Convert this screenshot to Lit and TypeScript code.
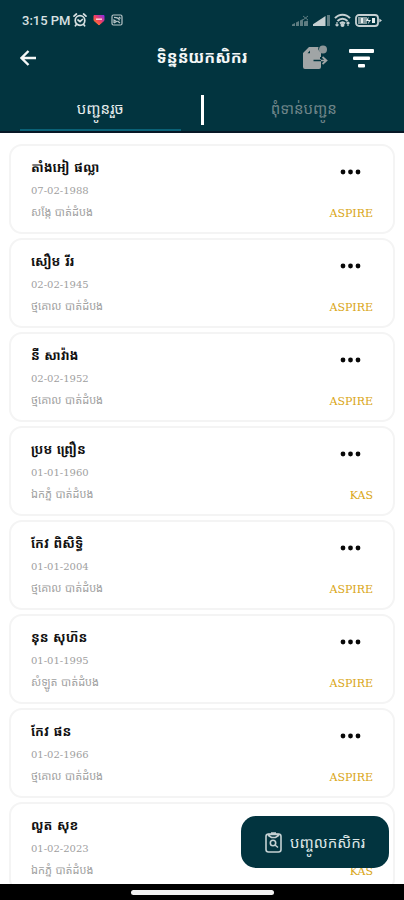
import { LitElement, html, css } from "lit";
import { customElement } from "lit/decorators.js";

interface Farmer {
  name: string;
  date: string;
  place: string;
  buyer: string;
}

const farmers: Farmer[] = [
  { name: "តាំងអៀ ផល្លា", date: "07-02-1988", place: "សង្កែ បាត់ដំបង", buyer: "ASPIRE" },
  { name: "សឿម រីរ", date: "02-02-1945", place: "ថ្មគោល បាត់ដំបង", buyer: "ASPIRE" },
  { name: "នី សាវ៉ាង", date: "02-02-1952", place: "ថ្មគោល បាត់ដំបង", buyer: "ASPIRE" },
  { name: "ប្រម ព្រឿន", date: "01-01-1960", place: "ឯកភ្នំ បាត់ដំបង", buyer: "KAS" },
  { name: "កែវ ពិសិទ្ធិ", date: "01-01-2004", place: "ថ្មគោល បាត់ដំបង", buyer: "ASPIRE" },
  { name: "នុន សុហ៊ន", date: "01-01-1995", place: "សំឡូត បាត់ដំបង", buyer: "ASPIRE" },
  { name: "កែវ ផន", date: "01-02-1966", place: "ថ្មគោល បាត់ដំបង", buyer: "ASPIRE" },
  { name: "លួត សុខ", date: "01-02-2023", place: "ឯកភ្នំ បាត់ដំបង", buyer: "KAS" },
];

@customElement("farmer-card")
class FarmerCard extends LitElement {
  static properties = { farmer: { attribute: false } };
  declare farmer: Farmer;

  static styles = css`
    :host {
      display: flex;
      justify-content: space-between;
      box-sizing: border-box;
      height: 90px;
      flex: none;
      padding: 10px 20px 7px;
      border: 2px solid #f4f4f4;
      border-radius: 13px;
      background: #fff;
    }
    .info,
    .side {
      display: flex;
      flex-direction: column;
      white-space: nowrap;
    }
    .side {
      align-items: flex-end;
      justify-content: space-between;
    }
    .name {
      margin: 0;
      font-size: 13px;
      line-height: 24px;
      height: 24px;
      font-weight: 700;
      color: #111;
    }
    .date,
    .place {
      height: 22px;
      font-size: 11px;
      line-height: 22px;
      color: #a0a0a0;
    }
    .date {
      font-size: 10px;
    }
    .more {
      width: 44px;
      height: 32px;
      padding: 0;
      border: 0;
      background: none;
      display: flex;
      align-items: center;
    }
    .buyer {
      font-size: 11px;
      line-height: 22px;
      height: 22px;
      color: #d9a514;
    }
  `;

  render() {
    const f = this.farmer;
    return html`
      <div class="info">
        <h2 class="name">${f.name}</h2>
        <time class="date">${f.date}</time>
        <span class="place">${f.place}</span>
      </div>
      <div class="side">
        <button class="more" aria-label="More">
          <svg width="44" height="8" viewBox="0 0 44 8" fill="#080808">
            <circle cx="14" cy="4" r="2.4" /><circle cx="21.5" cy="4" r="2.4" /><circle cx="29" cy="4" r="2.4" />
          </svg>
        </button>
        <span class="buyer">${f.buyer}</span>
      </div>
    `;
  }
}

@customElement("app-root")
class AppRoot extends LitElement {
  static styles = css`
    :host {
      display: flex;
      flex-direction: column;
      height: 100vh;
      overflow: hidden;
      background: #fff;
      font-family: "DejaVu Serif", "Noto Sans Khmer", "Khmer OS", serif;
    }
    svg {
      display: block;
      flex: none;
    }
    button {
      font-family: inherit;
      padding: 0;
      border: 0;
      background: none;
      color: inherit;
    }
    .head {
      flex: none;
      background: #02343f;
      color: #f4f7f7;
      border-bottom: 2px solid #071826;
    }
    .status {
      display: flex;
      align-items: center;
      height: 38px;
      padding: 2px 22px 0;
      box-sizing: border-box;
      font-family: Roboto, sans-serif;
      font-size: 13px;
      font-weight: 500;
      color: #d8e0e2;
    }
    .left,
    .right,
    .actions {
      display: flex;
      align-items: center;
    }
    .left {
      gap: 2px;
      flex: 1;
      white-space: nowrap;
    }
    .badges {
      display: flex;
      align-items: center;
      gap: 6px;
    }
    .right {
      gap: 4px;
    }
    .bar {
      display: grid;
      grid-template-columns: 1fr auto 1fr;
      align-items: center;
      height: 40px;
      padding: 0 20px;
    }
    .back {
      width: 18px;
      height: 32px;
      display: flex;
      align-items: center;
    }
    .title {
      margin: 0;
      font-size: 16px;
      line-height: 32px;
      font-weight: 700;
      white-space: nowrap;
    }
    .actions {
      gap: 20px;
      justify-content: flex-end;
      padding-right: 10px;
    }
    .tabs {
      display: grid;
      grid-template-columns: 1fr 3px 1fr;
      align-items: center;
      height: 53px;
    }
    .tab {
      height: 53px;
      margin: 0 20px;
      padding-top: 10px;
      box-sizing: border-box;
      border-bottom: 2px solid transparent;
      font-size: 15px;
      line-height: 40px;
      color: #6f8589;
      white-space: nowrap;
    }
    .tab.active {
      border-color: #0a6176;
      color: #e6eded;
    }
    .split {
      height: 30px;
      margin-top: 10px;
      background: #fff;
    }
    .list {
      flex: 1;
      min-height: 0;
      overflow: hidden;
      display: flex;
      flex-direction: column;
      gap: 4px;
      padding: 11px 9px 0 9px;
    }
    .add {
      position: absolute;
      right: 15px;
      bottom: 32px;
      display: flex;
      align-items: center;
      justify-content: center;
      gap: 8px;
      width: 148px;
      height: 52px;
      border-radius: 15px;
      background: #02343f;
      color: #dde6e6;
      font-size: 15px;
      white-space: nowrap;
    }
    .nav {
      flex: none;
      display: flex;
      justify-content: center;
      align-items: center;
      height: 16px;
      background: #000;
    }
    .pill {
      width: 143px;
      height: 5px;
      border-radius: 3px;
      background: #f2f2f2;
    }
  `;

  render() {
    return html`
      <header class="head">
        <div class="status">
          <div class="left">
            <span>3:15 PM</span>
            <div class="badges">
              <svg width="14" height="14" viewBox="0 0 14 14" fill="none" stroke="#d8e0e2" stroke-width="1.7" stroke-linecap="round">
                <circle cx="7" cy="7.5" r="4.8" /><path d="M1 3.2 3.4 1M13 3.2 10.6 1M5 7l2 1.7L9.3 6.5M3.4 11.5l-1 1.3M10.6 11.5l1 1.3" />
              </svg>
              <svg width="12" height="12" viewBox="0 0 12 12">
                <defs><linearGradient id="h" x1="0" y1="1" x2="1" y2="0"><stop offset="0" stop-color="#ff8a1f" /><stop offset=".5" stop-color="#f5405f" /><stop offset="1" stop-color="#8a2be2" /></linearGradient></defs>
                <path d="M1 1.5h10v5L6 11 1 6.5z" fill="url(#h)" stroke="url(#h)" stroke-linejoin="round" /><path d="M3 5.2h6" stroke="#ffd9e0" stroke-width="1.4" />
              </svg>
              <svg width="12" height="12" viewBox="0 0 12 12" fill="none" stroke="#b8c5c7" stroke-width="1.2">
                <rect x="1" y="1" width="10" height="10" rx="1.5" /><path d="M3 3.4c2 0 5 .6 5.5 3M3 9V6l2.5 1.5L3 9M9 9 6.5 7M8 3l1.5 1.5" />
              </svg>
            </div>
          </div>
          <div class="right">
            <svg width="17" height="11" viewBox="0 0 17 11" fill="#5f7d82"><path d="M0 11V9.4L3 8v3zM4 11V7.6L7 6v5zM8 11V5.6L11 4v7zM12 11V6.5l4-1V11z" /><path d="m11 1 5 4M16 1l-5 4" stroke="#5f7d82" /></svg>
            <svg width="17" height="11" viewBox="0 0 17 11"><path d="M0 11V9.2L12.5 1v10z" fill="#c6d0d2" /><path d="M14 0h3v11h-3z" fill="#5f7d82" /></svg>
            <svg width="17" height="14" viewBox="0 0 17 14" fill="none" stroke="#c6d0d2" stroke-width="2">
              <path d="M1 5.2C5 .6 12 .6 16 5.2M3.5 8c2.8-3 7.2-3 10 0M6 10.5c1.5-1.5 3.5-1.5 5 0" /><path d="M3 9v4M1.5 11.5 3 13l1.5-1.5M14 13V9m-1.5 1.5L14 9l1.5 1.5" stroke-width="1.2" /><circle cx="8.5" cy="12" r="1" />
            </svg>
            <svg width="27" height="13" viewBox="0 0 27 13">
              <rect x="1" y="1" width="22" height="11" rx="3" fill="none" stroke="#c6d0d2" stroke-width="1.8" /><path d="M3 3h9v7H3z" fill="#82999d" /><path d="M24.3 4.5 27 6.5l-2.7 2z" fill="#c6d0d2" /><path d="M6 4h2v5H6M13.5 2.8 10.8 7h3l-1 3.3L16 6h-2.8zM17 4h3v5h-3z" fill="#e6eded" />
            </svg>
          </div>
        </div>
        <div class="bar">
          <button class="back" aria-label="Back">
            <svg width="18" height="18" viewBox="0 0 18 18" fill="none" stroke="#f4f7f7" stroke-width="2.4"><path d="M16 9H1.5M8.5 2l-7 7 7 7" /></svg>
          </button>
          <h1 class="title">ទិន្នន័យកសិករ</h1>
          <div class="actions">
            <button aria-label="Export">
              <svg width="26" height="26" viewBox="0 0 26 26">
                <path d="M7 2h9.5a4 4 0 0 0 2.5 5v5h-1v2h1v8a2 2 0 0 1-2 2H3a2 2 0 0 1-2-2V8z" fill="#a0a5a6" />
                <circle cx="21" cy="4.5" r="4" fill="#8d9799" /><path d="M5.5 8.3 8 5.5v2.8z" fill="#02343f" />
                <path d="M11.5 15.5H19" fill="none" stroke="#02343f" stroke-width="1.5" /><path d="M19 15.5h5M20.5 12l4 3.5-4 3.5" fill="none" stroke="#a0a5a6" stroke-width="1.7" />
              </svg>
            </button>
            <button aria-label="Filter">
              <svg width="26" height="20" viewBox="0 0 26 20" fill="#fff"><rect x="1" y="1" width="25" height="4" rx="1" /><rect x="5" y="8.5" width="17" height="3.5" rx="1" /><rect x="10" y="16" width="7" height="3.5" rx="1" /></svg>
            </button>
          </div>
        </div>
        <nav class="tabs">
          <button class="tab active">បញ្ជូនរួច</button>
          <span class="split"></span>
          <button class="tab">ពុំទាន់បញ្ជូន</button>
        </nav>
      </header>
      <main class="list">${farmers.map((f) => html`<farmer-card .farmer=${f}></farmer-card>`)}</main>
      <button class="add">
        <svg width="17" height="21" viewBox="0 0 17 21" fill="none" stroke="#c5d1d3" stroke-width="1.6">
          <rect x="1" y="2" width="15" height="18" rx="2.5" /><path d="M3.5 2.5h10v1l-3 2h-4l-3-2zM6 1h5" /><circle cx="8" cy="11" r="2.7" /><path d="m10 13 3 2.5" />
        </svg>
        <span>បញ្ចូលកសិករ</span>
      </button>
      <footer class="nav"><div class="pill"></div></footer>
    `;
  }
}
